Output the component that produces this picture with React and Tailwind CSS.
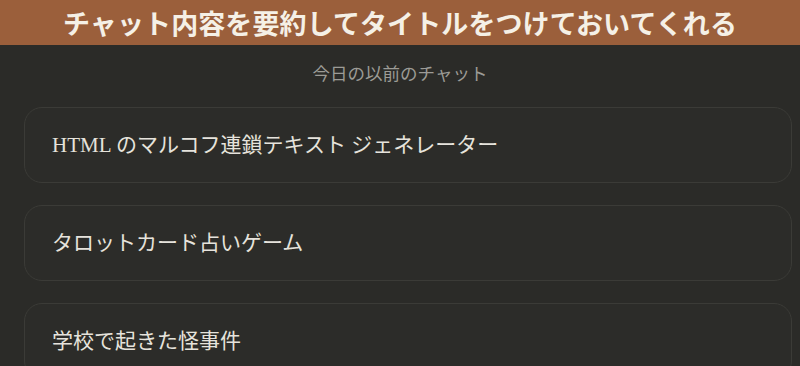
import React from 'react';

const chats = [
  'HTML のマルコフ連鎖テキスト ジェネレーター',
  'タロットカード占いゲーム',
  '学校で起きた怪事件',
];

const serif = { fontFamily: '"Liberation Serif", "Noto Sans CJK JP", serif' };

export default function App() {
  return (
    <div className="w-[800px] h-[366px] overflow-hidden bg-[#2b2b28]">
      <header className="h-[45px] bg-[#9b5f3b] flex items-center justify-center">
        <h1
          className="text-[27px] font-bold leading-none text-[#f5f0e6] tracking-[0.1px]"
          style={{ fontFamily: '"Noto Sans CJK JP", sans-serif' }}
        >
          チャット内容を要約してタイトルをつけておいてくれる
        </h1>
      </header>

      <p
        className="mt-[16px] text-center text-[17.5px] leading-[24px] text-[#9c9b96]"
        style={{ fontFamily: '"Noto Sans CJK JP", sans-serif' }}
      >
        今日の以前のチャット
      </p>

      <div className="mt-[22px] pl-[24px] pr-[8px] flex flex-col gap-[22px]">
        {chats.map((title) => (
          <div
            key={title}
            className="h-[76px] shrink-0 rounded-[18px] border border-[#3b3b37] bg-[#2c2c29] flex items-center px-[27px]"
          >
            <span className="text-[21px] leading-none text-[#e6e3dc]" style={serif}>
              {title}
            </span>
          </div>
        ))}
      </div>
    </div>
  );
}
